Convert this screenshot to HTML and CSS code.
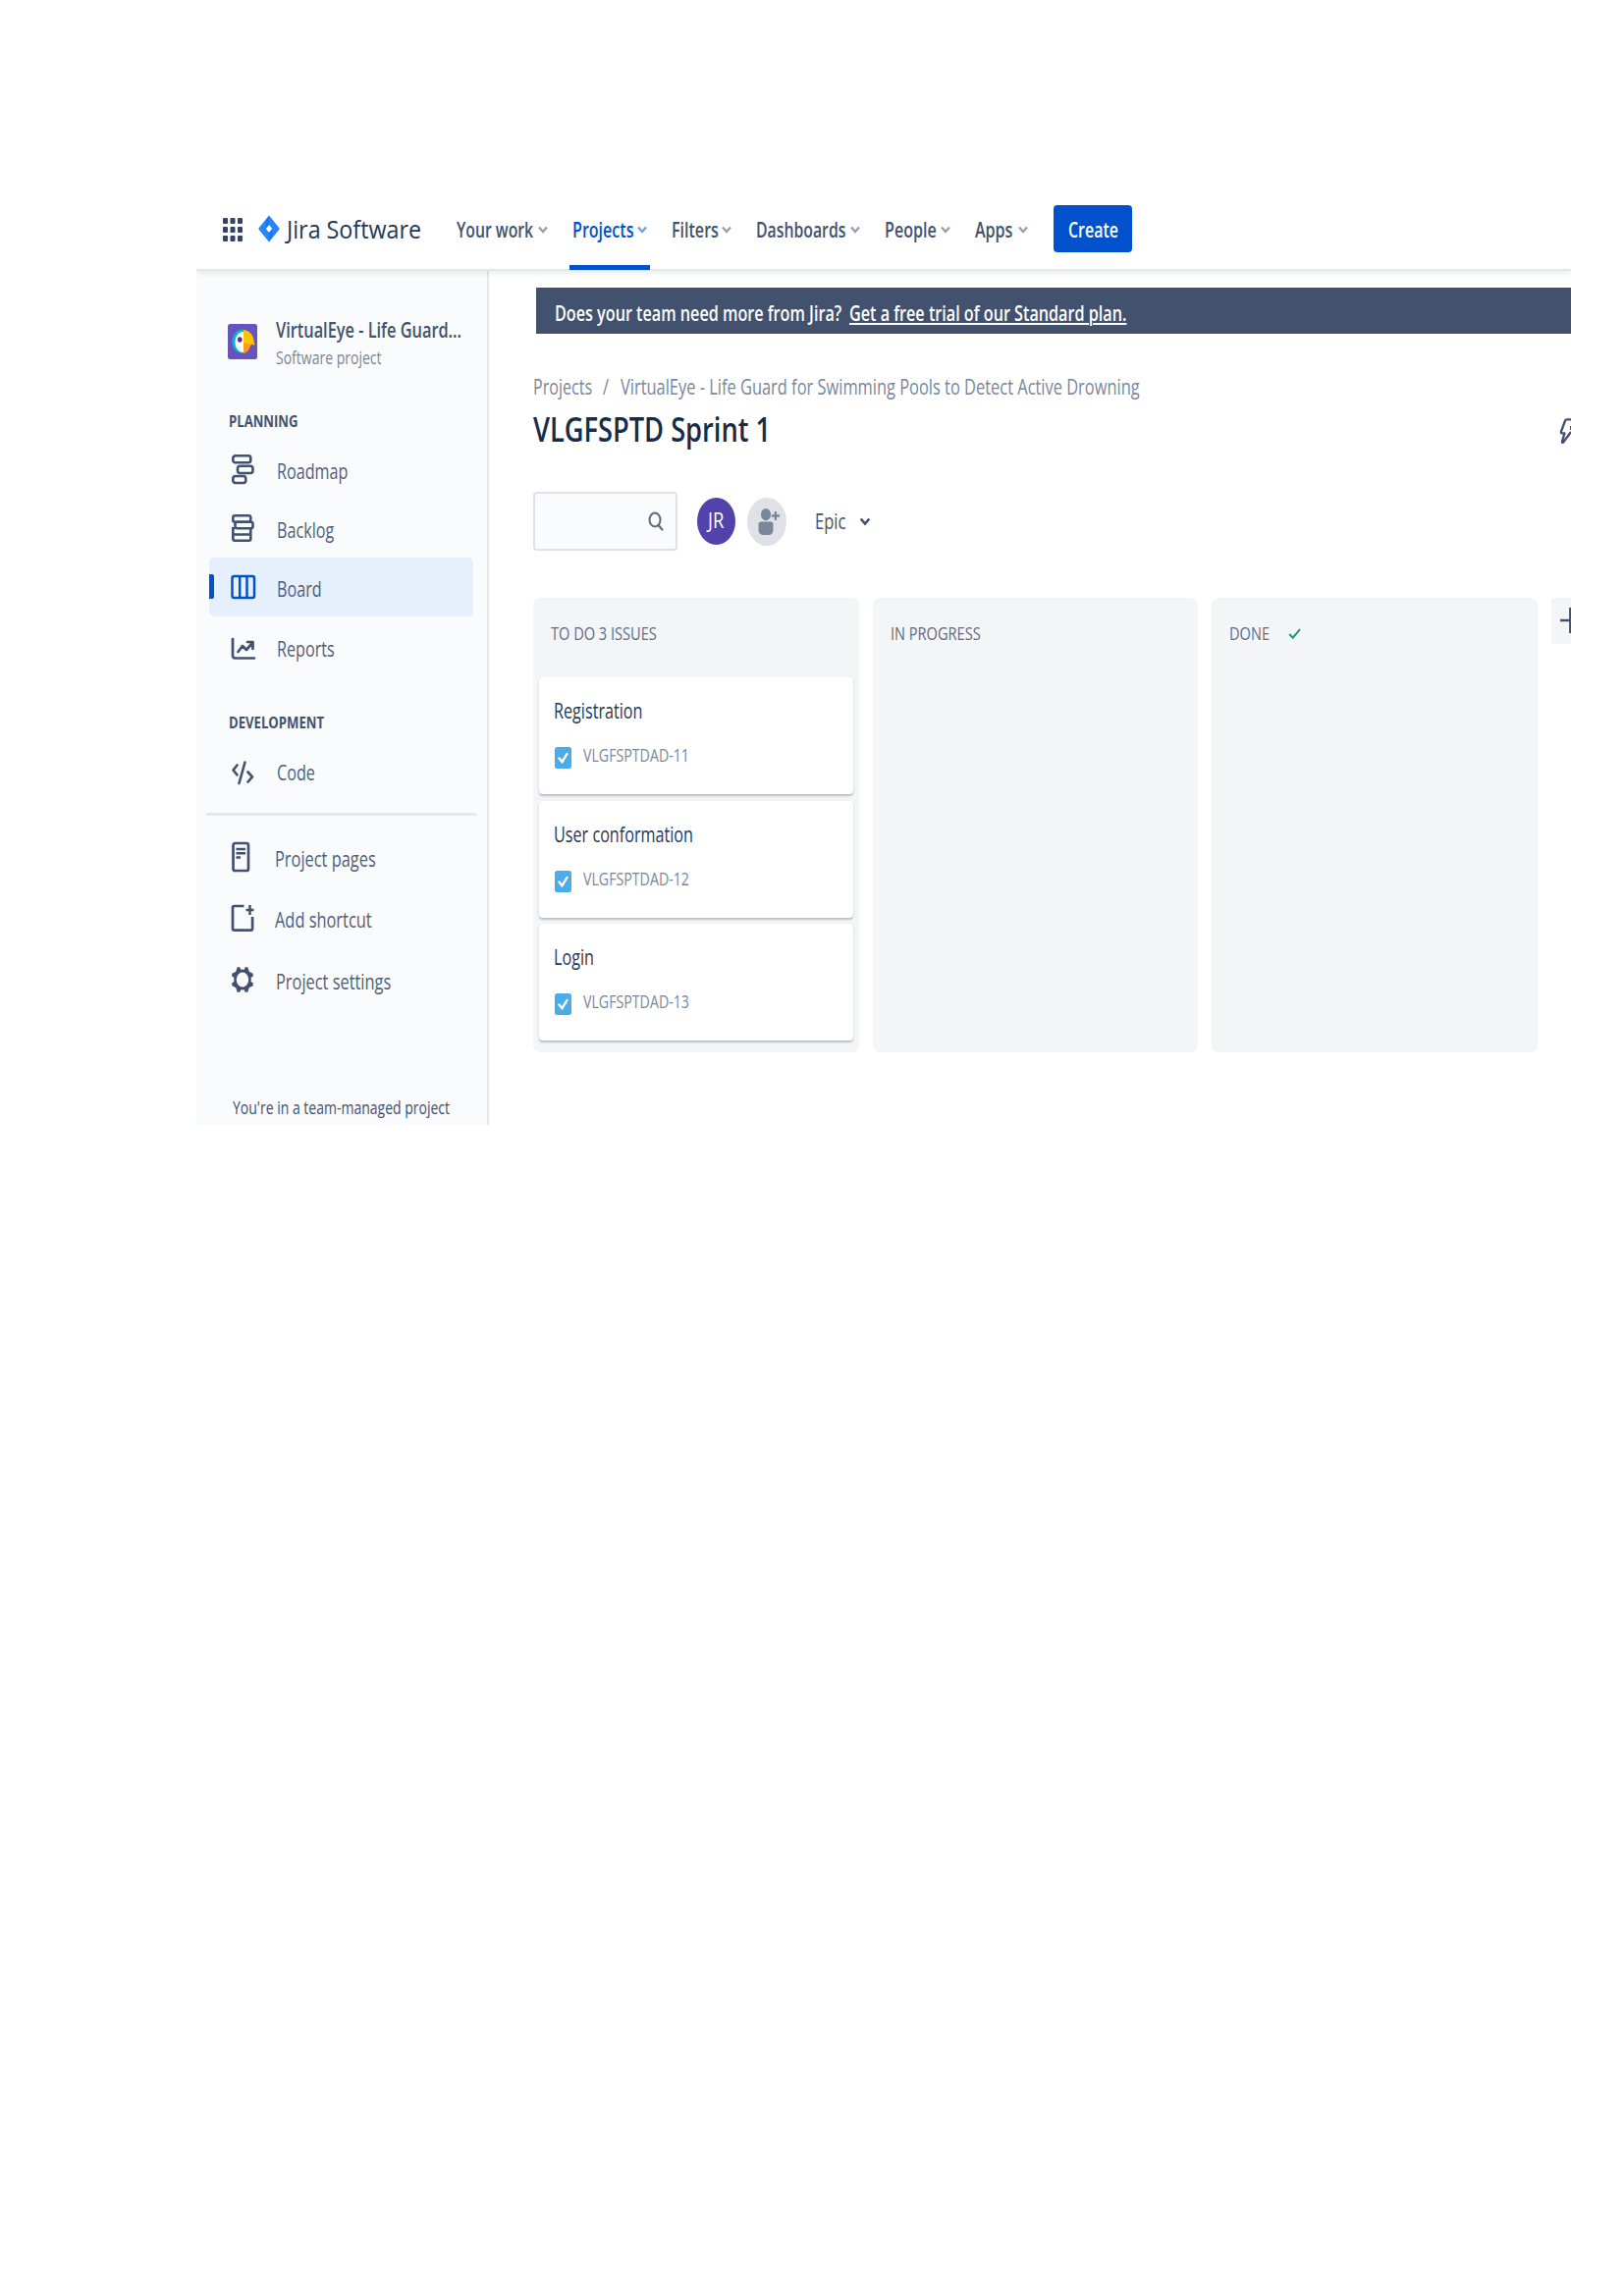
FILE: index.html
```html
<!DOCTYPE html>
<html lang="en">
<head>
<meta charset="utf-8">
<title>VLGFSPTD Sprint 1 - Jira Software</title>
<link rel="stylesheet" href="styles.css">
</head>
<body>
<div class="app">
  <header class="topbar">
    <svg class="switcher" viewBox="0 0 20 24" width="20" height="24"><g fill="#344563"><rect x="0" y="0" width="5" height="6" rx="1"/><rect x="7.5" y="0" width="5" height="6" rx="1"/><rect x="15" y="0" width="5" height="6" rx="1"/><rect x="0" y="9" width="5" height="6" rx="1"/><rect x="7.5" y="9" width="5" height="6" rx="1"/><rect x="15" y="9" width="5" height="6" rx="1"/><rect x="0" y="18" width="5" height="6" rx="1"/><rect x="7.5" y="18" width="5" height="6" rx="1"/><rect x="15" y="18" width="5" height="6" rx="1"/></g></svg>
    <div class="logo">
      <svg viewBox="0 0 22 28" width="22" height="28"><path fill="#2684ff" fill-rule="evenodd" d="M11 .5 21.2 13q.8 1 0 2L11 27.500.8 15q-.8-1 0-2ZM11 10 7.900 14 11 18l3.100-4Z"/><path d="M11 .5v9.500L8.500 13Q5.500 8 11 .5ZM11 27.500V18l2.500-3Q16.500 20 11 27.500Z" fill="#1264dc" opacity=".45"/></svg>
      <span class="t logo-text">Jira Software</span>
    </div>
    <nav class="nav">
      <a class="nav-item your-work"><span class="t">Your work</span><svg class="chev" viewBox="0 0 10 8"><path d="M1 1.500 5 6l4-4.500"/></svg></a>
      <a class="nav-item projects active"><span class="t">Projects</span><svg class="chev" viewBox="0 0 10 8"><path d="M1 1.500 5 6l4-4.500"/></svg></a>
      <a class="nav-item filters"><span class="t">Filters</span><svg class="chev" viewBox="0 0 10 8"><path d="M1 1.500 5 6l4-4.500"/></svg></a>
      <a class="nav-item dashboards"><span class="t">Dashboards</span><svg class="chev" viewBox="0 0 10 8"><path d="M1 1.500 5 6l4-4.500"/></svg></a>
      <a class="nav-item people"><span class="t">People</span><svg class="chev" viewBox="0 0 10 8"><path d="M1 1.500 5 6l4-4.500"/></svg></a>
      <a class="nav-item apps"><span class="t">Apps</span><svg class="chev" viewBox="0 0 10 8"><path d="M1 1.500 5 6l4-4.500"/></svg></a>
    </nav>
    <button class="create"><span class="t">Create</span></button>
  </header>
  <div class="body">
    <aside class="sidebar">
      <div class="project">
        <svg viewBox="0 0 30 36" width="30" height="36"><rect width="30" height="36" rx="2.500" fill="#6554c0"/><path d="M16 5.500C9 5.500 4.500 11 4.500 18S9 30 16 30Z" fill="#00b8d9"/><path d="M16 8c-5 0-8.500 4.500-8.500 10.500S11 29 16 29Z" fill="#fff"/><path d="M16 6c6.500.5 10 6 10.500 11l1 5-3.500-1.500C22 25 19.500 20 16 20Z" fill="#ffc400"/><path d="M16 20c3.500-1 5.500 0 7.500 1-1 5-4 8.500-7.500 9Z" fill="#ff991f"/><ellipse cx="12.300" cy="16" rx="2.300" ry="2.800" fill="#403294"/></svg>
        <div class="project-text"><span class="t project-name">VirtualEye - Life Guard...</span><span class="t project-type">Software project</span></div>
      </div>
      <h2 class="group planning"><span class="t">PLANNING</span></h2>
      <a class="item"><span class="icon"><svg viewBox="0 0 24 32" width="24" height="32"><g fill="none" stroke="#42526e" stroke-width="2.600"><rect x="2.300" y="2.300" width="18" height="7" rx="2.500"/><rect x="7" y="12.700" width="15.500" height="7.300" rx="2.500"/><rect x="2.300" y="23" width="13" height="7" rx="2.500"/></g></svg></span><span class="t">Roadmap</span></a>
      <a class="item"><span class="icon"><svg viewBox="0 0 24 32" width="24" height="32"><g fill="none" stroke="#42526e" stroke-width="2.600"><rect x="2.300" y="3.300" width="18" height="6.500" rx="2"/><rect x="4.500" y="9.800" width="18" height="6.400" rx="2"/><path d="M4 16.200H2.300V27q0 1.700 1.800 1.700H18.500q1.800 0 1.800-1.700V16.200M2.300 22.500H20"/></g></svg></span><span class="t">Backlog</span></a>
      <a class="item selected"><span class="icon"><svg viewBox="0 0 26 26" width="26" height="26"><g fill="none" stroke="#0052cc" stroke-width="2.500"><rect x="1.500" y="2" width="22.500" height="22" rx="2"/><path d="M9.200 2v22M16.500 2v22"/></g></svg></span><span class="t">Board</span></a>
      <a class="item reports"><span class="icon"><svg viewBox="0 0 26 24" width="26" height="24"><g fill="none" stroke="#42526e" stroke-width="2.700" stroke-linecap="round" stroke-linejoin="round"><path d="M2 2v16.500Q2 21.500 4.500 21.500H24"/><path d="m7.500 15 4.500-6 4 4 6-7M17 5h5.500v7"/></g></svg></span><span class="t">Reports</span></a>
      <h2 class="group development"><span class="t">DEVELOPMENT</span></h2>
      <a class="item code"><span class="icon"><svg viewBox="0 0 24 26" width="24" height="26"><g fill="none" stroke="#42526e" stroke-width="2.600" stroke-linecap="round" stroke-linejoin="round"><path d="M6.500 5.500 2.500 10.500l4 4.800M14.500 2.500l-6 21.500M17.500 12.500l4.500 4.800-4.500 5.200"/></g></svg></span><span class="t">Code</span></a>
      <hr class="divider">
      <a class="item pages"><span class="icon"><svg viewBox="0 0 24 32" width="24" height="32"><rect x="2.500" y="2" width="15.500" height="28" rx="2" fill="none" stroke="#42526e" stroke-width="2.700"/><path d="M5.500 8h9.500M5.500 12.300h9.500M5.500 16.500h4.500" stroke="#42526e" stroke-width="2.400"/></svg></span><span class="t">Project pages</span></a>
      <a class="item shortcut"><span class="icon"><svg viewBox="0 0 26 30" width="26" height="30"><g fill="none" stroke="#42526e" stroke-width="2.700"><path d="M13.500 3H3.500Q2 3 2 4.500V26q0 1.600 1.600 1.600H20.500q1.600 0 1.600-1.600V14"/><path d="M19.500 2v10M15.500 7h8" stroke-width="2.500"/></g></svg></span><span class="t">Add shortcut</span></a>
      <a class="item settings"><span class="icon"><svg viewBox="-12 -14 24 28" width="24" height="28"><g transform="scale(1 1.200)" fill="#42526e"><g id="teeth"><path d="M-5.300-10.700h2.600L-1.500-8h3L2.700-10.700h2.600L7-6H-7Z"/></g><use href="#teeth" transform="rotate(90)"/><use href="#teeth" transform="rotate(180)"/><use href="#teeth" transform="rotate(270)"/><circle r="7.500" fill="#fafbfc" stroke="#42526e" stroke-width="2.600"/></g></svg></span><span class="t">Project settings</span></a>
      <p class="note"><span class="t">You're in a team-managed project</span></p>
    </aside>
    <main class="main">
      <div class="banner"><span class="t ask">Does your team need more from Jira?</span><a class="t trial">Get a free trial of our Standard plan.</a></div>
      <div class="crumbs"><span class="t c1">Projects</span><span class="t c2">/</span><span class="t c3">VirtualEye - Life Guard for Swimming Pools to Detect Active Drowning</span></div>
      <div class="heading"><h1 class="t">VLGFSPTD Sprint 1</h1><svg viewBox="0 0 12 28" width="12" height="28"><path d="M12 2.300H7.500Q6.500 2.300 6.200 3.200L2 14.500q-.5 1.800 1 1.800H5.500L3 24.500q-.3 2.200 1.200 1L12 15" fill="none" stroke="#42526e" stroke-width="2.300" stroke-linejoin="round"/><path d="M11 9h1v4h-1z" fill="#42526e"/></svg></div>
      <div class="tools">
        <div class="search"><svg viewBox="0 0 16 20" width="16" height="20"><ellipse cx="7" cy="8.500" rx="5.500" ry="7" fill="none" stroke="#5e6c84" stroke-width="2"/><path d="m10.500 14 4 4.500" stroke="#5e6c84" stroke-width="2.200" stroke-linecap="round"/></svg></div>
        <div class="avatar jr"><span class="t">JR</span></div>
        <div class="avatar add"><svg viewBox="0 0 22 28" width="22" height="28"><g fill="#7a869a"><ellipse cx="8" cy="7.200" rx="5" ry="6.200"/><path d="M.5 17q0-2.500 2.500-2.500H13q2.500 0 2.500 2.500v5q0 6-5 6h-5q-5 0-5-6Z"/><path d="M16.800 4h2.200v3.300h3v2.400h-3V13h-2.200V9.700h-3V7.300h3Z"/></g></svg></div>
        <div class="epic"><span class="t">Epic</span><svg viewBox="0 0 12 9" width="12" height="9"><path d="m1.700 1.500 4.300 5 4.300-5" fill="none" stroke="#42526e" stroke-width="2.600"/></svg></div>
      </div>
      <div class="board">
        <section class="column">
          <h3><span class="t todo">TO DO 3 ISSUES</span></h3>
          <article class="card"><span class="t card-title">Registration</span><div class="meta"><svg viewBox="0 0 17 22" width="17" height="22"><rect width="17" height="22" rx="2.500" fill="#4bade8"/><path d="m4.500 11.500 3 3.700L12.500 7" fill="none" stroke="#fff" stroke-width="2.400" stroke-linecap="round"/></svg><span class="t key">VLGFSPTDAD-11</span></div></article>
          <article class="card"><span class="t card-title">User conformation</span><div class="meta"><svg viewBox="0 0 17 22" width="17" height="22"><rect width="17" height="22" rx="2.500" fill="#4bade8"/><path d="m4.500 11.500 3 3.700L12.500 7" fill="none" stroke="#fff" stroke-width="2.400" stroke-linecap="round"/></svg><span class="t key">VLGFSPTDAD-12</span></div></article>
          <article class="card"><span class="t card-title">Login</span><div class="meta"><svg viewBox="0 0 17 22" width="17" height="22"><rect width="17" height="22" rx="2.500" fill="#4bade8"/><path d="m4.500 11.500 3 3.700L12.500 7" fill="none" stroke="#fff" stroke-width="2.400" stroke-linecap="round"/></svg><span class="t key">VLGFSPTDAD-13</span></div></article>
        </section>
        <section class="column"><h3><span class="t">IN PROGRESS</span></h3></section>
        <section class="column"><h3><span class="t done">DONE</span><svg viewBox="0 0 13 11" width="13" height="11"><path d="m1.200 6 3.500 3.700L12 1.200" fill="none" stroke="#1f9470" stroke-width="2"/></svg></h3></section>
        <div class="add-column"><svg viewBox="0 0 11 28" width="11" height="28"><path d="M0 14h11M10.300 1v26" stroke="#42526e" stroke-width="2.400"/></svg></div>
      </div>
    </main>
  </div>
</div>
</body>
</html>
```
FILE: styles.css
```css
* { box-sizing: border-box; }
body { margin: 0; background: #fff; font-family: "Open Sans", "Noto Sans", sans-serif; color: #42526e; }
h1, h2, h3, p { margin: 0; font-weight: inherit; font-size: inherit; }
svg { display: block; flex: none; }

/* Condensed text: drawn narrower than its natural width, anchored left */
.t { display: block; flex: 1 1 0; min-width: 0; white-space: nowrap; transform: scaleX(var(--fit, .778)); transform-origin: 0 50%; line-height: 1.4; }

.app { width: 1400px; height: 956px; margin: 190px 0 0 200px; overflow: hidden; display: flex; flex-direction: column; }

.topbar { flex: none; height: 86px; padding: 0 0 1px 27px; display: flex; align-items: center; border-bottom: 2px solid #e4e6ea; position: relative; z-index: 1; box-shadow: 0 2px 6px rgba(9, 30, 66, .09); }
.switcher { margin-top: 5px; }
.logo { display: flex; align-items: center; gap: 7px; width: 202px; margin: 4px 0 0 16px; }
.logo-text { --fit: .895; font-size: 26px; font-weight: 500; color: #253858; }
.nav { --fit: .765; display: flex; gap: 25px; height: 84px; }
.nav-item { display: flex; align-items: center; font-size: 21px; font-weight: 600; padding-top: 5px; position: relative; }
.nav-item .t { padding-top: 2px; }
.chev { width: 10px; height: 8px; fill: none; stroke: #97a0af; stroke-width: 2.300; }
.your-work { --fit: .75; width: 93px; }
.projects { width: 76px; }
.filters { width: 61px; }
.dashboards { --fit: .752; width: 106px; }
.people { width: 67px; }
.apps { width: 54px; }
.active { color: #0052cc; }
.active .chev { stroke: #6c9fe8; }
.active::after { content: ""; position: absolute; left: -3px; right: -3px; bottom: -1px; height: 5px; background: #0052cc; }
.create { --fit: .76; width: 80px; height: 48px; margin: 3px 0 0 26px; padding: 3px 0 0 15px; border: 0; border-radius: 4px; background: #0052cc; color: #fff; font: 600 21px "Open Sans", sans-serif; text-align: left; display: flex; align-items: center; }

.body { flex: 1; display: flex; min-height: 0; }
.sidebar { width: 298px; background: #fafbfc; border-right: 2px solid #e6e7ea; display: flex; flex-direction: column; }
.project { display: flex; gap: 19px; padding: 54px 0 0 32px; height: 139px; }
.project-text { display: flex; flex-direction: column; margin-top: -8px; flex: 1; }
.project-name { --fit: .778; flex: none; font-size: 21px; line-height: 29px; font-weight: 600; }
.project-type { flex: none; font-size: 18px; line-height: 26px; color: #7a869a; }
.group { --fit: .795; display: flex; align-items: center; height: 28px; padding-left: 33px; font-size: 16.500px; font-weight: 700; }
.planning { margin-bottom: 5px; }
.development { margin: 31px 0 7px; }
.item { --fit: .77; flex: none; display: flex; align-items: center; height: 60px; margin: 0 14px 0 13px; padding-left: 22px; font-size: 21px; color: #505f79; }
.item .t { padding-top: 5px; }
.item.reports .t, .item.code .t { padding-top: 2px; }
.icon { width: 47px; flex: none; }
.selected { background: #e6effc; border-radius: 5px; position: relative; }
.selected::before { content: ""; position: absolute; left: 0; top: 17px; width: 5px; height: 25px; background: #0052cc; border-radius: 0 2px 2px 0; }
.reports { margin-top: 3px; }
.divider { flex: none; width: 275px; height: 3px; margin: 11px 0 12px 10px; border: 0; background: #e6e8ee; }
.pages, .shortcut, .settings { --fit: .78; }
.pages .icon, .shortcut .icon { width: 45px; }
.settings .icon { width: 46px; }
.shortcut { margin-top: 2px; }
.settings { margin-top: 3px; }
.note { display: flex; margin: 88px 0 0 37px; font-size: 18px; line-height: 26px; }

.main { flex: 1; min-width: 0; padding: 17px 0 0 45px; }
.banner { --fit: .77; display: flex; align-items: center; height: 47px; margin-left: 3px; padding: 6px 0 0 19px; background: #42526e; color: #fff; font-size: 21px; font-weight: 600; }
.ask { flex: 0 0 300px; }
.trial { text-decoration: underline; text-underline-offset: 2px; text-decoration-thickness: 1.500px; }
.crumbs { --fit: .782; display: flex; margin-top: 40px; height: 30px; font-size: 21px; line-height: 30px; color: #7a869a; }
.c1 { --fit: .765; flex: 0 0 71px; }
.c2 { flex: 0 0 18px; }
.heading { --fit: .778; display: flex; align-items: center; height: 50px; margin-top: 1px; font-size: 35px; font-weight: 600; color: #172b4d; }
.heading svg { margin-top: 5px; }
.tools { display: flex; align-items: center; height: 60px; margin-top: 40px; }
.search { width: 147px; height: 60px; border: 2px solid #dfe1e6; border-radius: 4px; background: #fafbfc; display: flex; align-items: center; justify-content: flex-end; padding-right: 12px; }
.avatar { width: 39px; height: 48px; border-radius: 50%; margin-left: 20px; display: flex; align-items: center; }
.jr { --fit: .88; background: #5243aa; color: #fff; font-size: 21px; font-weight: 500; padding-left: 11px; }
.add { width: 40px; height: 49px; margin-left: 12px; background: #dfe1e6; padding-left: 11px; }
.epic { --fit: .785; display: flex; align-items: center; width: 57px; margin-left: 29px; font-size: 21px; font-weight: 500; padding-top: 2px; }
.board { display: flex; gap: 14px; margin-top: 48px; }
.column { flex: none; width: 331.500px; height: 463px; border-radius: 7px; background: #f4f5f7; padding: 0 6px; display: flex; flex-direction: column; gap: 6.500px; }
.column h3 { --fit: .81; display: flex; align-items: center; height: 74.500px; padding: 0 0 2px 12px; font-size: 18px; font-weight: 500; color: #5e6c84; }
.done { flex: 0 0 60px; }
.card { flex: none; height: 119px; border-radius: 4px; background: #fff; padding: 19px 0 0 15px; box-shadow: 0 1.500px 2px rgba(9, 30, 66, .25); display: flex; flex-direction: column; }
.card-title { --fit: .77; flex: none; font-size: 21px; line-height: 30px; color: #253858; }
.meta { display: flex; align-items: flex-start; gap: 12px; margin: 22px 0 0 1px; height: 22px; }
.key { --fit: .788; font-size: 18px; line-height: 26px; margin-top: -5px; color: #7a869a; font-weight: 500; }
.add-column { flex: none; width: 50px; height: 47px; border-radius: 4px; background: #f4f5f7; padding: 9px 0 0 9px; }
```
